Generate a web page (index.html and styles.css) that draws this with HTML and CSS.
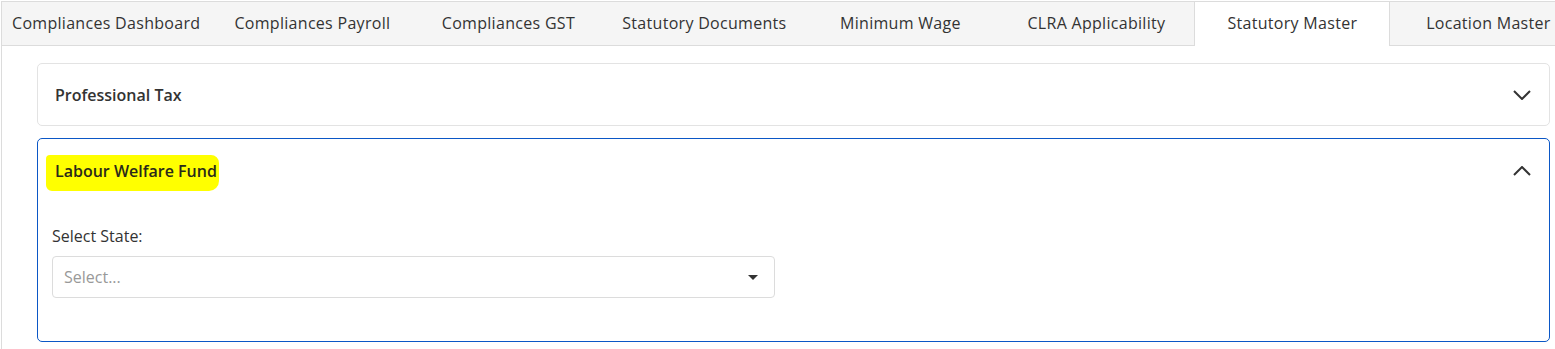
FILE: index.html
```html
<!DOCTYPE html>
<html lang="en">
<head>
    <meta charset="UTF-8">
    <meta name="viewport" content="width=device-width, initial-scale=1.0">
    <title>Statutory Master</title>
    <link rel="stylesheet" href="styles.css">
</head>
<body>
    <div class="page">
        <ul class="tabs">
            <li class="tab first">Compliances Dashboard</li>
            <li class="tab">Compliances Payroll</li>
            <li class="tab">Compliances GST</li>
            <li class="tab">Statutory Documents</li>
            <li class="tab">Minimum Wage</li>
            <li class="tab">CLRA Applicability</li>
            <li class="tab active">Statutory Master</li>
            <li class="tab">Location Master</li>
        </ul>

        <div class="tab-content">
            <div class="accordion-item">
                <div class="accordion-header">
                    <span class="accordion-title">Professional Tax</span>
                    <svg class="chevron" width="18" height="10" viewBox="0 0 18 10">
                        <path d="M1 1 L9 9 L17 1" fill="none" stroke="#333" stroke-width="2"/>
                    </svg>
                </div>
            </div>

            <div class="accordion-item open">
                <div class="accordion-header">
                    <span class="accordion-title"><span class="highlight">Labour Welfare Fund</span></span>
                    <svg class="chevron" width="18" height="10" viewBox="0 0 18 10">
                        <path d="M1 9 L9 1 L17 9" fill="none" stroke="#333" stroke-width="2"/>
                    </svg>
                </div>
                <div class="accordion-body">
                    <label class="field-label">Select State:</label>
                    <div class="select-box">
                        <span class="placeholder">Select...</span>
                        <span class="caret"></span>
                    </div>
                </div>
            </div>
        </div>
    </div>
</body>
</html>
```

FILE: styles.css
```css
body {
    margin: 0;
    font-family: "Open Sans", Arial, sans-serif;
    font-size: 16px;
    color: #333;
    background-color: #fff;
    overflow: hidden;
}
.page {
    margin: 1px 0 0 1px;
    border-left: 1px solid #dcdcdc;
    border-top: 1px solid #dcdcdc;
    min-height: 360px;
}
.tabs {
    display: flex;
    list-style: none;
    margin: 0;
    padding: 0;
    height: 43px;
    background-color: #f5f5f5;
    border-bottom: 1px solid #dcdcdc;
}
.tab {
    flex: none;
    min-width: 196px;
    padding: 0 0 2px 0;
    box-sizing: border-box;
    display: flex;
    align-items: center;
    justify-content: center;
    white-space: nowrap;
    letter-spacing: 0.3px;
    color: #333;
    border-left: 1px solid transparent;
    border-right: 1px solid transparent;
}
.tab.first {
    padding: 0 13px 2px 9px;
}
.tab.active {
    background-color: #fff;
    border-left-color: #dcdcdc;
    border-right-color: #dcdcdc;
    height: 44px;
}
.tab-content {
    padding: 17px 5px 0 35px;
}
.accordion-item {
    border: 1px solid #e3e3e3;
    border-radius: 5px;
    margin-bottom: 12px;
}
.accordion-item.open {
    border-color: #0b57c6;
}
.accordion-header {
    display: flex;
    align-items: center;
    justify-content: space-between;
    height: 61px;
    padding: 0 18px 0 17px;
}
.accordion-item.open .accordion-header {
    height: 64px;
}
.accordion-title {
    font-weight: 600;
    color: #333;
}
.highlight {
    background-color: #ffff00;
    padding: 5px 2px 9px 9px;
    margin-left: -9px;
    border-radius: 4px 8px 10px 6px;
    color: #2a2a1a;
}
.accordion-body {
    padding: 22px 16px 43px 14px;
}
.field-label {
    display: block;
    margin-bottom: 9px;
    color: #333;
}
.select-box {
    width: 723px;
    height: 42px;
    box-sizing: border-box;
    border: 1px solid #dcdcdc;
    border-radius: 4px;
    display: flex;
    align-items: center;
    justify-content: space-between;
    padding: 0 16px 0 11px;
}
.placeholder {
    color: #999;
}
.caret {
    width: 0;
    height: 0;
    border-left: 5px solid transparent;
    border-right: 5px solid transparent;
    border-top: 5px solid #333;
}
```
